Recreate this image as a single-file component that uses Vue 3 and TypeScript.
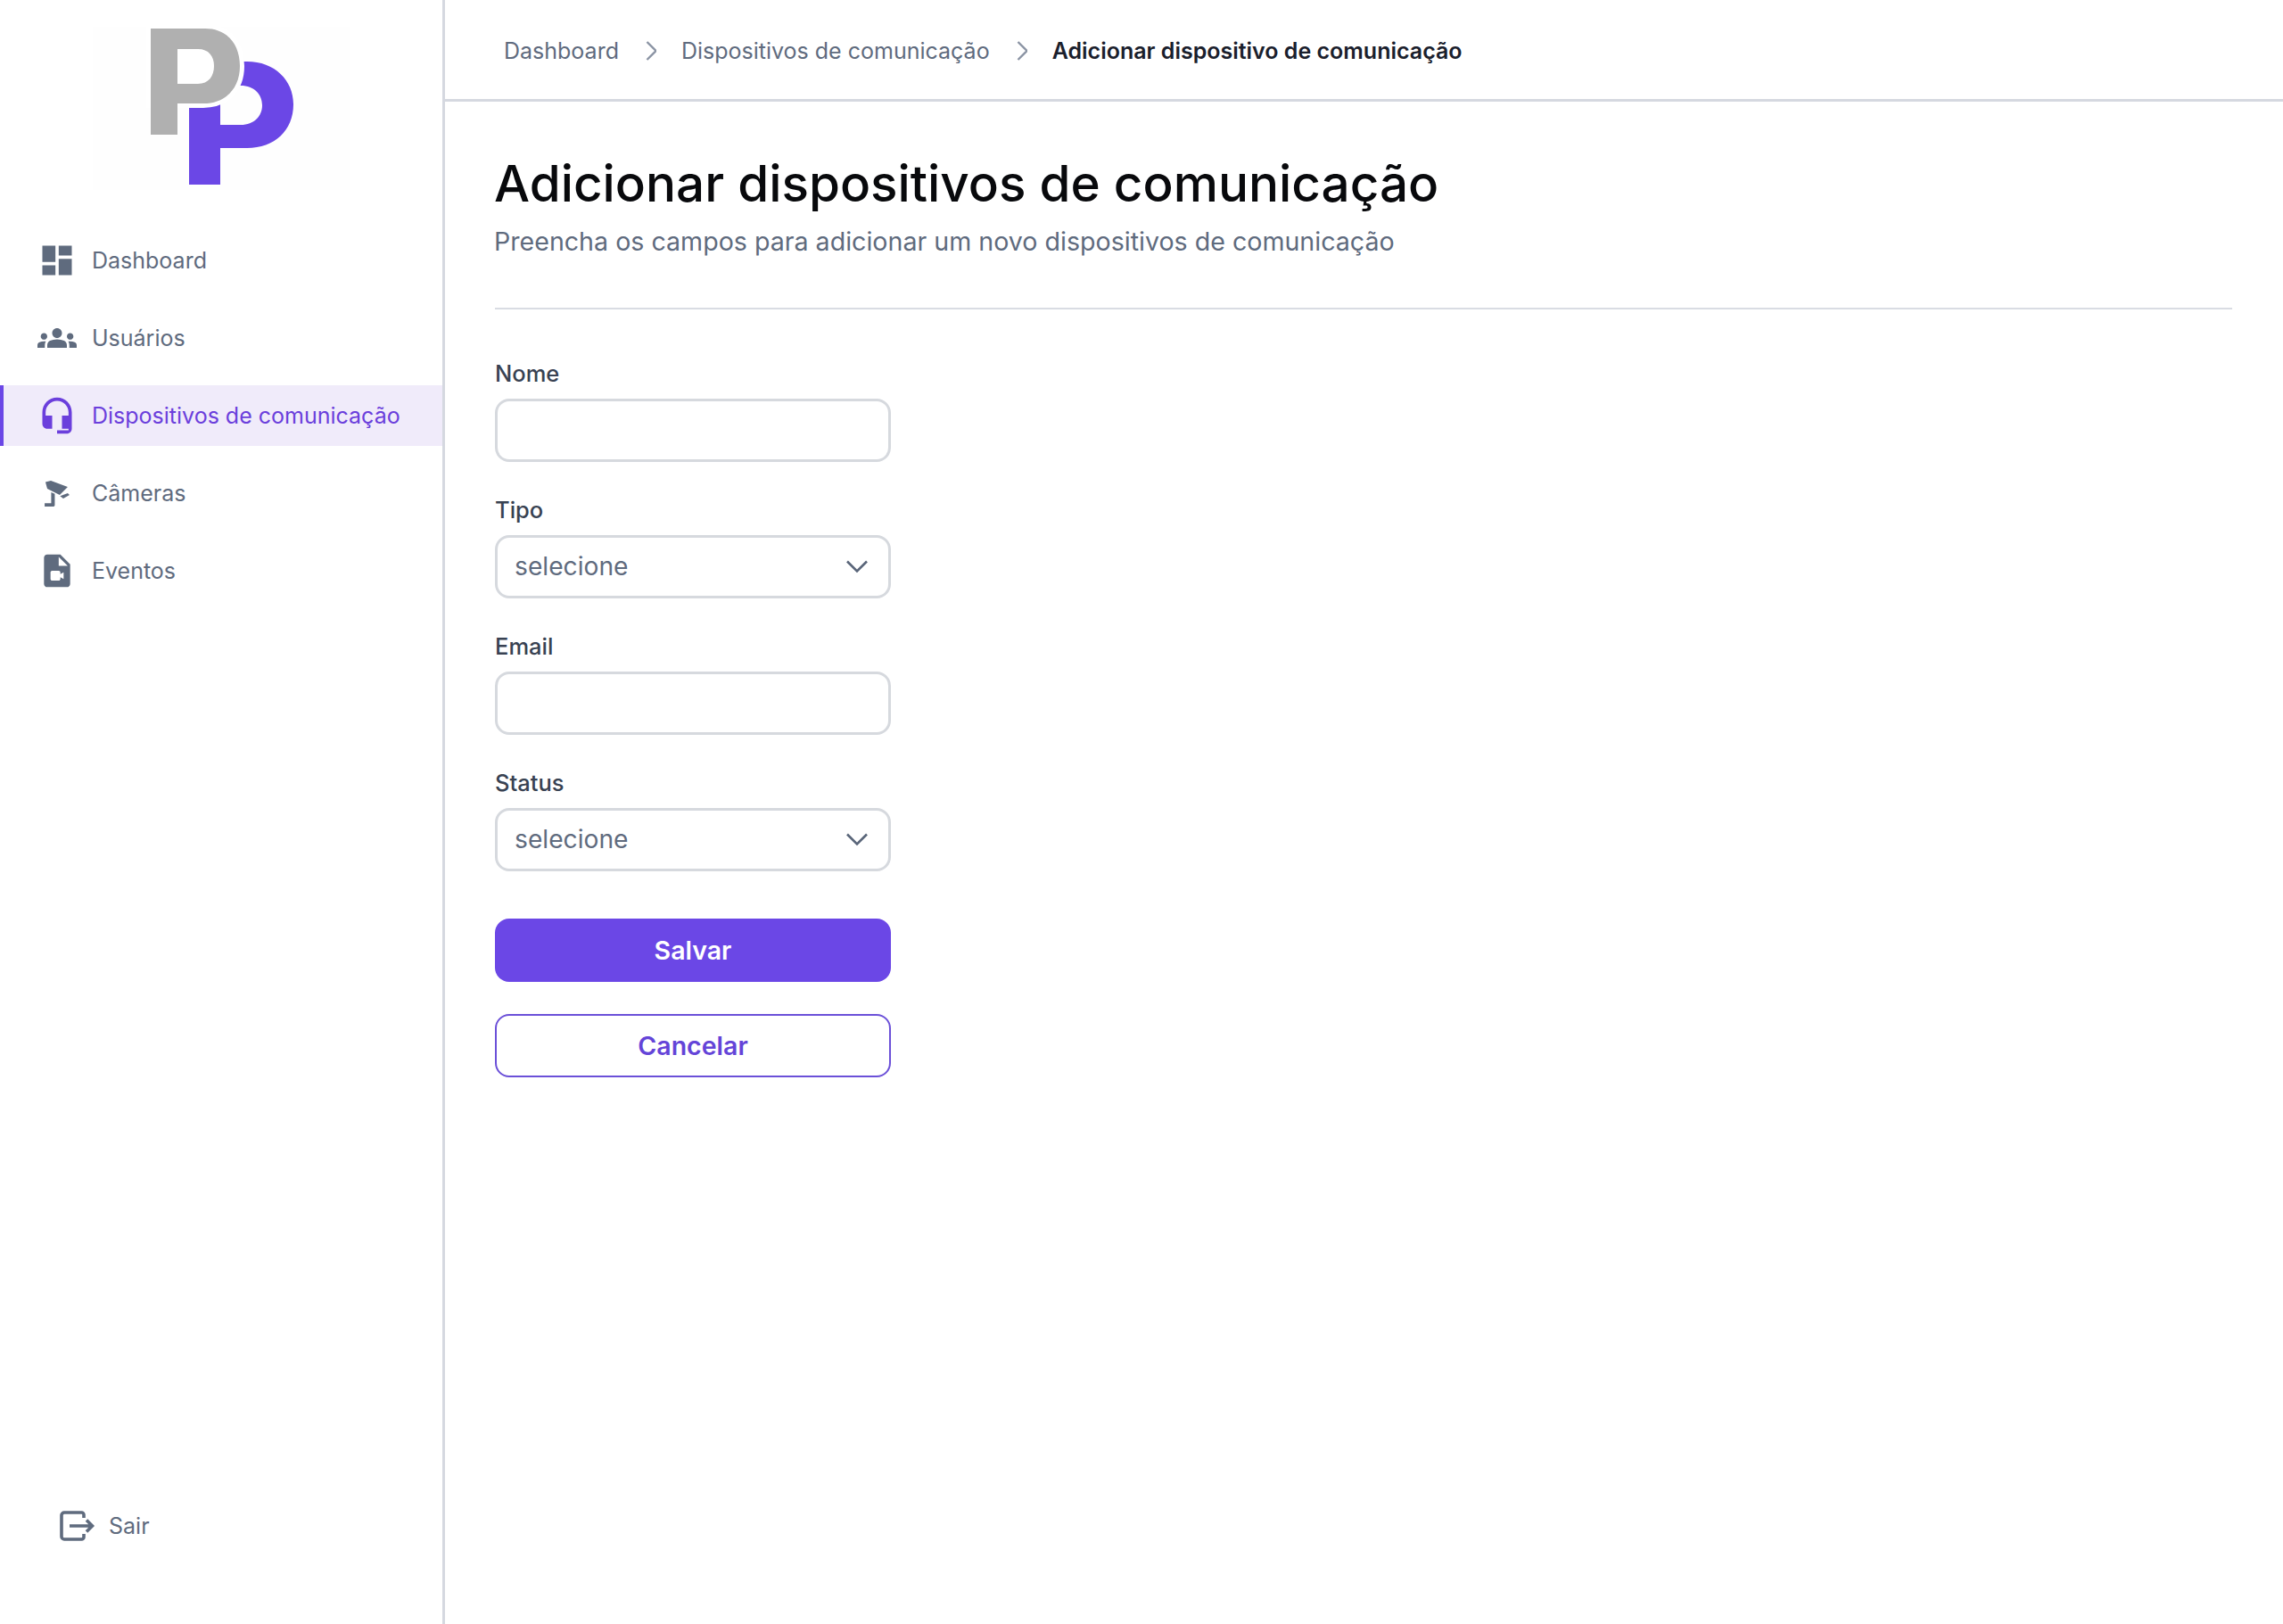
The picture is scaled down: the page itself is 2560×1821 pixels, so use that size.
<script setup lang="ts">
const items = [
  { label: 'Dashboard', icon: 'dash' },
  { label: 'Usuários', icon: 'users' },
  { label: 'Dispositivos de comunicação', icon: 'head', active: true },
  { label: 'Câmeras', icon: 'cam' },
  { label: 'Eventos', icon: 'file' },
]
const fields = [
  { label: 'Nome', select: false },
  { label: 'Tipo', select: true },
  { label: 'Email', select: false },
  { label: 'Status', select: true },
]
</script>

<template>
  <div class="app">
    <aside class="side">
      <svg class="logo" width="288" height="183" viewBox="104 30 288 183">
        <path d="M212 69H277C308 69 329 90 329 117C329 146 308 166 277 166H247V207H212Z M247 96V140H270C285 140 294 130 294 118C294 106 285 96 270 96Z" fill="#6b47e6" fill-rule="evenodd" />
        <path d="M169 32H230C255 32 269 50 269 74C269 100 252 116 228 116H169Z" fill="#fff" stroke="#fff" stroke-width="10" />
        <path d="M169 32H230C255 32 269 50 269 74C269 100 252 116 228 116H199V151H169Z M199 55V94H222C234 94 240 85 240 74C240 63 234 55 222 55Z" fill="#b0b0b0" fill-rule="evenodd" />
      </svg>
      <nav class="nav">
        <a v-for="it in items" :key="it.label" class="item" :class="{ active: it.active }">
          <svg class="ico" viewBox="0 0 24 24" width="44" height="44" fill="currentColor">
            <path v-if="it.icon === 'dash'" d="M3 13h8V3H3v10zm0 8h8v-6H3v6zm10 0h8V11h-8v10zm0-18v6h8V3h-8z" />
            <path v-else-if="it.icon === 'users'" d="M4 13c1.1 0 2-.9 2-2s-.9-2-2-2-2 .9-2 2 .9 2 2 2zm1.13 1.1c-.37-.06-.74-.1-1.13-.1-.99 0-1.93.21-2.78.58C.48 14.9 0 15.62 0 16.43V18h4.5v-1.61c0-.83.23-1.61.63-2.29zM20 13c1.1 0 2-.9 2-2s-.9-2-2-2-2 .9-2 2 .9 2 2 2zm4 3.43c0-.81-.48-1.53-1.22-1.85-.85-.37-1.79-.58-2.78-.58-.39 0-.76.04-1.13.1.4.68.63 1.46.63 2.29V18H24v-1.57zm-7.76-2.78C15.07 13.14 13.63 12.75 12 12.75c-1.63 0-3.07.39-4.24.9C6.68 14.13 6 15.21 6 16.39V18h12v-1.61c0-1.18-.68-2.26-1.76-2.74zM12 12c1.66 0 3-1.34 3-3s-1.34-3-3-3-3 1.34-3 3 1.34 3 3 3z" />
            <path v-else-if="it.icon === 'head'" d="M12 1c-4.97 0-9 4.03-9 9v7c0 1.66 1.34 3 3 3h3v-8H5v-2c0-3.87 3.13-7 7-7s7 3.13 7 7v2h-4v8h4v1h-7v2h6c1.66 0 3-1.34 3-3V10c0-4.97-4.03-9-9-9z" />
            <template v-else-if="it.icon === 'cam'">
              <path d="M4.9 5.2 8.2 4.4 18.5 8.2 13.6 13.1 6 9.3Z" />
              <path d="M13.8 13.8 18.5 12 19.6 13.1 15.8 15.3Z" />
              <path d="M8.4 11.4 10.6 12.4V19.2C10.6 19.8 10.2 20.2 9.6 20.2H4.4V18.2H8.4Z" />
            </template>
            <path v-else fill-rule="evenodd" d="M14,2H6.01c-1.1,0-2,.9-2,2L4,20c0,1.1.89,2,1.99,2H18c1.1,0,2-.9,2-2V8L14,2z M13,9V3.5L18.5,9H13z M14,14l2-1.06v4.12L14,16v1c0,.55-.45,1-1,1H9c-.55,0-1-.45-1-1v-4c0-.55.45-1,1-1h4c.55,0,1,.45,1,1V14z" />
          </svg>
          <span>{{ it.label }}</span>
        </a>
      </nav>
      <a class="exit">
        <svg width="40" height="34" viewBox="0 0 40 34" fill="none" stroke="currentColor" stroke-width="3.6">
          <path d="M27 8V4.5C27 3.1 25.9 2 24.5 2H5C3.4 2 2 3.4 2 5V29C2 30.6 3.4 32 5 32H24.5C25.9 32 27 30.9 27 29.5V26" />
          <path d="M11 17H36M30 10.5 36.5 17 30 23.5" />
        </svg>
        <span>Sair</span>
      </a>
    </aside>
    <div class="main">
      <header class="crumbs">
        <span>Dashboard</span>
        <svg width="14" height="24" viewBox="-1.5 0 14 24" fill="none" stroke="#8a93a3" stroke-width="2.4"><path d="M2 2 12 12 2 22" /></svg>
        <span>Dispositivos de comunicação</span>
        <svg width="14" height="24" viewBox="-1.5 0 14 24" fill="none" stroke="#8a93a3" stroke-width="2.4"><path d="M2 2 12 12 2 22" /></svg>
        <b>Adicionar dispositivo de comunicação</b>
      </header>
      <section class="content">
        <h1>Adicionar dispositivos de comunicação</h1>
        <p class="sub">Preencha os campos para adicionar um novo dispositivos de comunicação</p>
        <hr />
        <form class="form" @submit.prevent>
          <label v-for="f in fields" :key="f.label" class="field">
            <span class="lab">{{ f.label }}</span>
            <div class="box">
              <template v-if="f.select">
                <span>selecione</span>
                <svg width="26" height="16" viewBox="0 0 26 16" fill="none" stroke="#596579" stroke-width="2.6"><path d="M2 2.5 13 13.5 24 2.5" /></svg>
              </template>
            </div>
          </label>
          <button class="btn primary" type="button">Salvar</button>
          <button class="btn ghost" type="button">Cancelar</button>
        </form>
      </section>
    </div>
  </div>
</template>

<style>
body { background: #fff; }
</style>

<style scoped>
.app { display: flex; height: 1821px; font-family: Inter, "Noto Sans", sans-serif; color: #5f6b7e; background: #fff; }
.side { width: 496px; flex: none; border-right: 3px solid #d5d8e0; display: flex; flex-direction: column; }
.logo { display: block; margin: 30px 0 0 104px; background: #fefefe; }
.nav { display: flex; flex-direction: column; gap: 19px; margin-top: 45px; }
.item { height: 68px; display: flex; align-items: center; gap: 17px; padding-left: 42px; font-size: 25px; border-left: 4px solid transparent; }
.item.active { background: #f0ebfa; border-left-color: #6b47e6; color: #6b3fdc; }
.ico { flex: none; margin-left: -4px; }
.exit { margin-top: auto; margin-bottom: 93px; margin-left: 67px; display: flex; align-items: center; gap: 15px; font-size: 25px; }
.main { flex: 1; min-width: 0; }
.crumbs { border-bottom: 3px solid #d5d8e0; display: flex; align-items: center; padding: 2px 0 0 66px; gap: 28px; font-size: 25px; box-sizing: border-box; height: 114px; }
.crumbs b { color: #1a202c; font-weight: 600; }
.content { padding: 56px 57px 0 56px; }
h1 { margin: 0 0 0 -1px; font-size: 56.6px; line-height: 72px; font-weight: 500; color: #08090c; }
.sub { margin: 9px 0 0 -1px; font-size: 28.6px; line-height: 40px; color: #5f6b7e; }
hr { border: 0; height: 2px; background: #d9dce3; margin: 54px 0 0; }
.form { width: 444px; margin-top: 54px; display: flex; flex-direction: column; }
.field { display: flex; flex-direction: column; margin-bottom: 36.5px; }
.lab { font-size: 25.5px; line-height: 36px; font-weight: 500; color: #384252; margin-bottom: 9.5px; }
.box { height: 71px; box-sizing: border-box; border: 3px solid #d6d9de; border-radius: 16px; display: flex; align-items: center; justify-content: space-between; padding: 0 22px 0 19px; font-size: 28.2px; }
.btn { height: 71px; width: 100%; border-radius: 16px; font: 600 28.5px Inter, sans-serif; box-sizing: border-box; }
.primary { background: #6b47e6; color: #fff; border: 0; margin-top: 17px; }
.ghost { background: #fff; color: #6444d8; border: 2px solid #6b50d8; margin-top: 36px; }
</style>
